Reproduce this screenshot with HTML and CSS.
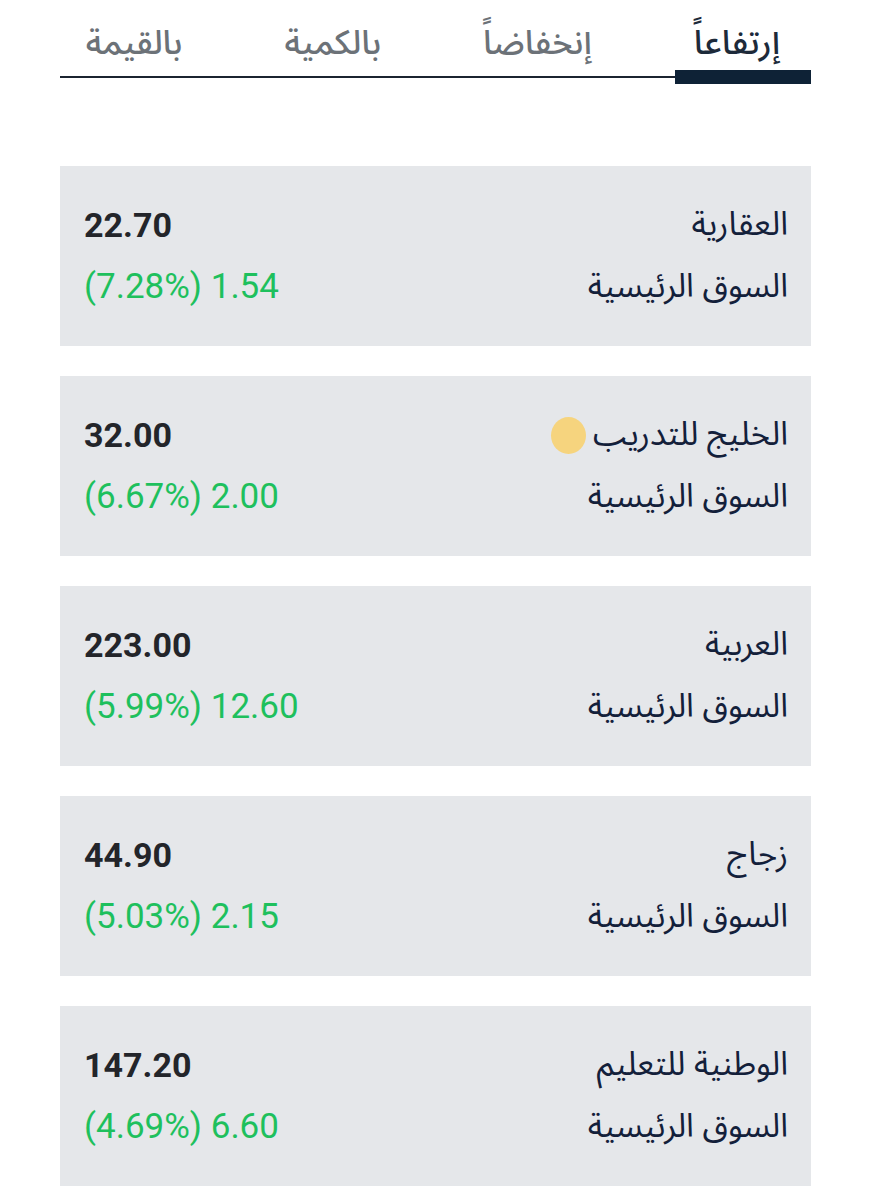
FILE: index.html
```html
<!DOCTYPE html>
<html lang="ar" dir="rtl">
<head>
<meta charset="utf-8">
<title>الأسهم</title>
<link rel="stylesheet" href="styles.css">
</head>
<body>
<div class="page">
  <nav class="tabs">
    <div class="tab active">إرتفاعاً</div>
    <div class="tab">إنخفاضاً</div>
    <div class="tab">بالكمية</div>
    <div class="tab">بالقيمة</div>
  </nav>

  <div class="list">
    <div class="card">
      <div class="row">
        <span class="name">العقارية</span>
        <span class="price" dir="ltr">22.70</span>
      </div>
      <div class="row">
        <span class="market">السوق الرئيسية</span>
        <span class="change" dir="ltr">(7.28%) 1.54</span>
      </div>
    </div>

    <div class="card">
      <div class="row">
        <span class="name-wrap"><span class="name">الخليج للتدريب</span><span class="dot"></span></span>
        <span class="price" dir="ltr">32.00</span>
      </div>
      <div class="row">
        <span class="market">السوق الرئيسية</span>
        <span class="change" dir="ltr">(6.67%) 2.00</span>
      </div>
    </div>

    <div class="card">
      <div class="row">
        <span class="name">العربية</span>
        <span class="price" dir="ltr">223.00</span>
      </div>
      <div class="row">
        <span class="market">السوق الرئيسية</span>
        <span class="change" dir="ltr">(5.99%) 12.60</span>
      </div>
    </div>

    <div class="card">
      <div class="row">
        <span class="name">زجاج</span>
        <span class="price" dir="ltr">44.90</span>
      </div>
      <div class="row">
        <span class="market">السوق الرئيسية</span>
        <span class="change" dir="ltr">(5.03%) 2.15</span>
      </div>
    </div>

    <div class="card">
      <div class="row">
        <span class="name">الوطنية للتعليم</span>
        <span class="price" dir="ltr">147.20</span>
      </div>
      <div class="row">
        <span class="market">السوق الرئيسية</span>
        <span class="change" dir="ltr">(4.69%) 6.60</span>
      </div>
    </div>
  </div>
</div>
</body>
</html>
```

FILE: styles.css
```css
html, body {
  margin: 0;
  padding: 0;
  background: #ffffff;
}

body {
  font-family: "Noto Sans Arabic", "Noto Sans", "DejaVu Sans", sans-serif;
}

.page {
  padding: 0 61px 0 60px;
}

.tabs {
  display: flex;
  flex-direction: row;
  gap: 52px;
  box-sizing: border-box;
  padding-top: 13px;
  border-bottom: 2px solid #1b2430;
  height: 78px;
  margin-bottom: 88px;
}

.tab {
  position: relative;
  padding: 0 31px 0 19px;
  font-size: 34px;
  line-height: 60px;
  font-weight: 500;
  color: #6c7278;
}

.tab.active {
  color: #1d2a3a;
}

.tab.active::after {
  content: "";
  position: absolute;
  left: 0;
  right: 0;
  bottom: -8px;
  height: 14px;
  background: #0e2236;
}

.list {
  display: flex;
  flex-direction: column;
  gap: 30px;
}

.card {
  height: 180px;
  background: #e5e7ea;
  box-sizing: border-box;
  padding: 0 23px 0 24px;
  display: flex;
  flex-direction: column;
  justify-content: center;
}

.row {
  display: flex;
  justify-content: space-between;
  align-items: center;
  height: 62px;
}

.name-wrap {
  display: flex;
  align-items: center;
  gap: 7px;
}

.name, .market {
  font-size: 33px;
  line-height: 1.2;
  color: #13203a;
}

.dot {
  width: 35px;
  height: 37px;
  border-radius: 50%;
  background: #f6d47e;
}

.price {
  font-family: Roboto, "Liberation Sans", sans-serif;
  font-weight: 700;
  font-size: 34px;
  line-height: 1.2;
  color: #23252a;
}

.change {
  font-family: Roboto, "Liberation Sans", sans-serif;
  font-size: 35px;
  line-height: 1.2;
  color: #1ec05d;
}
```
